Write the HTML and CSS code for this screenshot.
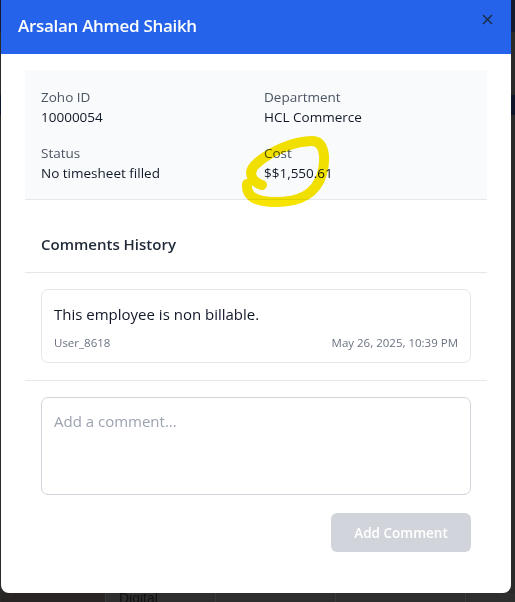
FILE: index.html
```html
<!DOCTYPE html>
<html lang="en">
<head>
<meta charset="utf-8">
<title>Employee details</title>
<link rel="stylesheet" href="styles.css">
</head>
<body>
<div class="backdrop">
  <div class="modal">
    <div class="modal-header">
      <h2 class="modal-title">Arsalan Ahmed Shaikh</h2>
      <button class="close-btn" aria-label="Close">
        <svg width="11" height="11" viewBox="0 0 11 11"><path d="M1 1 L10 10 M10 1 L1 10" stroke="#1e293b" stroke-width="1.4" fill="none"/></svg>
      </button>
    </div>
    <div class="modal-body">
      <div class="info-grid">
        <div class="info-item"><div class="info-label">Zoho ID</div><div class="info-value">10000054</div></div>
        <div class="info-item"><div class="info-label">Department</div><div class="info-value">HCL Commerce</div></div>
        <div class="info-item"><div class="info-label">Status</div><div class="info-value">No timesheet filled</div></div>
        <div class="info-item"><div class="info-label">Cost</div><div class="info-value">$$1,550.61</div></div>
        <svg class="marker" width="100" height="90" viewBox="0 0 100 90"><path d="M22 55 C10 51 8 41 16 34 C30 21 55 11 72 11 C85 11 86 29 82 44 C76 64 60 72 35 72 C15 72 6 66 7 54" stroke="#f7e400" stroke-width="10" stroke-linecap="round" stroke-linejoin="round" fill="none"/></svg>
      </div>
      <h3 class="section-title">Comments History</h3>
      <div class="comments">
        <div class="comment-card">
          <p class="comment-text">This employee is non billable.</p>
          <div class="comment-meta"><span>User_8618</span><span>May 26, 2025, 10:39 PM</span></div>
        </div>
      </div>
      <div class="add-comment">
        <textarea class="comment-input" placeholder="Add a comment..."></textarea>
        <div class="actions"><button class="add-btn" disabled>Add Comment</button></div>
      </div>
    </div>
  </div>
  <div class="under-row">
    <div class="cell c1"></div>
    <div class="cell c2">Digital</div>
    <div class="cell c3"></div>
    <div class="cell c4"></div>
    <div class="cell c5"></div>
  </div>
</div>
</body>
</html>
```

FILE: styles.css
```css
* { box-sizing: border-box; }
html, body { margin: 0; padding: 0; }
body {
  background: #2c2c2c;
  font-family: "Open Sans", "Noto Sans", sans-serif;
  width: 515px;
  height: 602px;
  overflow: hidden;
}
.backdrop {
  padding-left: 1px;
  width: 515px;
  background: linear-gradient(#151a2c 0 32px, #2a2a2a 32px 95px, #10162a 95px 115px, #2a2a2a 115px);
}
.modal {
  width: 510px;
  height: 593px;
  background: #fff;
  border-radius: 0 0 8px 8px;
  overflow: hidden;
  display: flex;
  flex-direction: column;
}
.modal-header {
  height: 54px;
  background: #2563eb;
  display: flex;
  align-items: flex-start;
  justify-content: space-between;
  padding: 0 18px 0 17px;
}
.modal-title {
  margin: 13px 0 0;
  color: #fff;
  font-size: 17px;
  letter-spacing: -0.3px;
  font-weight: 600;
  line-height: 25px;
}
.close-btn {
  margin-top: 14px;
  background: none;
  border: 0;
  padding: 0;
  width: 11px;
  height: 11px;
  display: flex;
}
.modal-body {
  padding: 16px 24px 0 24px;
  display: flex;
  flex-direction: column;
}
.info-grid {
  position: relative;
  background: #f9fafb;
  border-bottom: 1px solid #e5e7eb;
  display: grid;
  grid-template-columns: 223px 1fr;
  row-gap: 16px;
  padding: 17px 16px 16px 16px;
  height: 130px;
}
.info-label {
  color: #4b5563;
  font-size: 13.5px;
  font-weight: 500;
  line-height: 20px;
}
.info-value {
  color: #111827;
  font-size: 13.5px;
  line-height: 20px;
}
.marker {
  position: absolute;
  left: 215px;
  top: 60px;
  mix-blend-mode: multiply;
}
.section-title {
  margin: 0;
  padding: 32px 16px 16px;
  font-size: 15px;
  font-weight: 600;
  color: #1f2937;
  line-height: 24px;
  border-bottom: 1px solid #e5e7eb;
}
.comments {
  padding: 16px 16px 17px;
  border-bottom: 1px solid #e5e7eb;
}
.comment-card {
  border: 1px solid #e5e7eb;
  border-radius: 7px;
  padding: 13px 12px 11px;
}
.comment-text {
  margin: 0 0 10px;
  font-size: 15px;
  color: #111827;
  line-height: 22px;
}
.comment-meta {
  display: flex;
  justify-content: space-between;
  font-size: 11.5px;
  color: #6b7280;
  line-height: 16px;
}
.add-comment {
  padding: 16px 16px 0;
}
.comment-input {
  display: block;
  width: 100%;
  height: 98px;
  resize: none;
  border: 1px solid #d1d5db;
  border-radius: 7px;
  padding: 12px 12px;
  font-family: inherit;
  font-size: 15px;
  line-height: 22px;
}
.comment-input::placeholder { color: #9ca3af; }
.actions {
  display: flex;
  justify-content: flex-end;
  margin-top: 18px;
}
.add-btn {
  width: 140px;
  height: 39px;
  border: 0;
  border-radius: 6px;
  background: #d1d5db;
  color: #fff;
  font-family: inherit;
  font-size: 13.5px;
  font-weight: 600;
}
.under-row {
  display: flex;
  height: 9px;
  overflow: hidden;
  background: #2e2e2e;
}
.cell {
  border-right: 1px solid #3a3a3a;
  font-size: 14px;
  line-height: 14px;
  color: #111;
  font-family: "Liberation Sans", sans-serif;
}
.c1 { width: 105px; background: #2a2525; }
.c2 { width: 110px; padding-left: 13px; margin-top: -2px; line-height: 14px; }
.c3 { width: 120px; }
.c4 { width: 130px; }
.c5 { flex: 1; border-right: 0; }
```
